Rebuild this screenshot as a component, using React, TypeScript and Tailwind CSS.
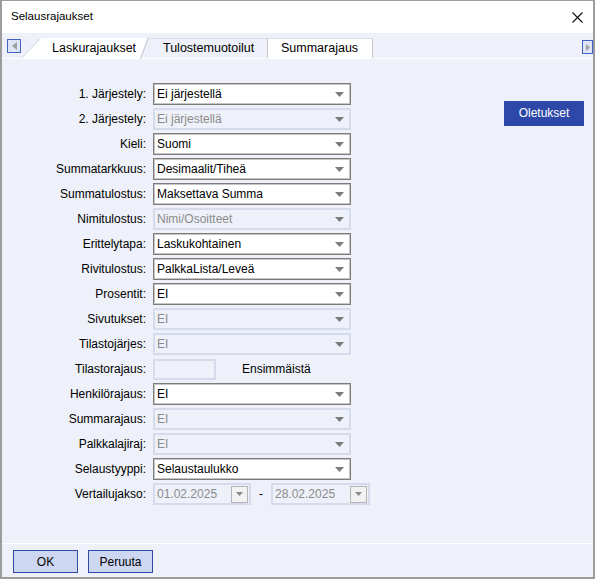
import React from "react";

const FONT = "font-['Liberation_Sans',Arial,sans-serif]";

function Tri({ c = "#7b7b7b" }: { c?: string }) {
  return (
    <svg width="9" height="5" viewBox="0 0 9 5" className="shrink-0">
      <path d="M0 0H9L4.5 5Z" fill={c} />
    </svg>
  );
}

function Sel({ v, d }: { v: string; d?: boolean }) {
  return (
    <div
      className={
        d
          ? "w-[198px] h-[22px] flex items-center justify-between pl-[2px] pr-[5px] border-2 border-[#d5dbea] text-[#8b8b8b] text-[12px]"
          : "w-[198px] h-[22px] flex items-center justify-between pl-[3px] pr-[6px] bg-white border border-[#7c7c7c] shadow-[inset_0_0_0_1px_#c6c6c6] text-black text-[12px]"
      }
    >
      <span className="leading-none">{v}</span>
      <Tri />
    </div>
  );
}

function DateBox({ v, w }: { v: string; w: string }) {
  return (
    <div
      className={`${w} h-[22px] flex items-center justify-between pl-[2px] pr-[1px] border-2 border-[#d5dbea] text-[#8b8b8b] text-[12px]`}
    >
      <span className="leading-none">{v}</span>
      <div className="w-[17px] h-[17px] flex items-center justify-center bg-[#f2f2f2] border border-[#b4b4b4]">
        <svg width="7" height="4" viewBox="0 0 7 4">
          <path d="M0 0H7L3.5 4Z" fill="#8a8a8a" />
        </svg>
      </div>
    </div>
  );
}

type Row = { l: string; v?: string; d?: boolean; kind?: "tilasto" | "date" };

const rows: Row[] = [
  { l: "1. Järjestely:", v: "Ei järjestellä" },
  { l: "2. Järjestely:", v: "Ei järjestellä", d: true },
  { l: "Kieli:", v: "Suomi" },
  { l: "Summatarkkuus:", v: "Desimaalit/Tiheä" },
  { l: "Summatulostus:", v: "Maksettava Summa" },
  { l: "Nimitulostus:", v: "Nimi/Osoitteet", d: true },
  { l: "Erittelytapa:", v: "Laskukohtainen" },
  { l: "Rivitulostus:", v: "PalkkaLista/Leveä" },
  { l: "Prosentit:", v: "EI" },
  { l: "Sivutukset:", v: "EI", d: true },
  { l: "Tilastojärjes:", v: "EI", d: true },
  { l: "Tilastorajaus:", kind: "tilasto" },
  { l: "Henkilörajaus:", v: "EI" },
  { l: "Summarajaus:", v: "EI", d: true },
  { l: "Palkkalajiraj:", v: "EI", d: true },
  { l: "Selaustyyppi:", v: "Selaustaulukko" },
  { l: "Vertailujakso:", kind: "date" },
];

export default function App() {
  return (
    <div
      className={`${FONT} w-[595px] h-[579px] flex flex-col border-t border-l-2 border-r-2 border-b-2 border-[#9c9c9c] bg-[#eef1f9] text-black overflow-hidden`}
    >
      {/* Title bar */}
      <div className="h-[32px] bg-white flex items-center justify-between pl-[9px] pr-[10px] shrink-0">
        <span className="text-[11.5px] leading-none">Selausrajaukset</span>
        <svg width="11" height="11" viewBox="0 0 11 11">
          <path d="M0.5 0.5L10.5 10.5M10.5 0.5L0.5 10.5" stroke="#111" strokeWidth="1.1" />
        </svg>
      </div>

      {/* Tab strip */}
      <div className="h-[25px] flex items-end shrink-0 text-[12.5px]">
        <div className="ml-[5px] mb-[5px] w-[14px] h-[14px] flex items-center justify-center bg-[#dfe5f4] border border-[#4262c4]">
          <svg width="5" height="8" viewBox="0 0 5 8">
            <path d="M5 0V8L0 4Z" fill="#a0a0a0" />
          </svg>
        </div>
        <div className="relative w-[126px] h-[20px] -mr-[7px] z-10 flex items-center pl-[31px]">
          <svg className="absolute inset-0" width="126" height="20" viewBox="0 0 126 20">
            <path d="M0 20L19 0H126L119 20Z" fill="#fff" />
            <path d="M0.5 20L19.5 0.5" stroke="#c8ccd6" strokeWidth="1" fill="none" />
          </svg>
          <span className="relative leading-none">Laskurajaukset</span>
        </div>
        <div className="relative w-[128px] h-[20px] flex items-center pl-[23px] border-t border-[#d9dde7] border-r border-r-[#c6c6c6]">
          <svg className="absolute left-0 top-0" width="9" height="20" viewBox="0 0 9 20">
            <path d="M8 0L0.5 20" stroke="#c2c6cf" strokeWidth="1" fill="none" />
          </svg>
          <span className="relative leading-none">Tulostemuotoilut</span>
        </div>
        <div className="w-[105px] h-[20px] flex items-center pl-[13px] bg-white border-t border-[#d9dde7] border-r border-r-[#c6c6c6]">
          <span className="leading-none">Summarajaus</span>
        </div>
        <div className="ml-auto mb-[4px] w-[11px] h-[14px] flex items-center justify-center bg-[#dfe5f4] border border-[#4262c4]">
          <svg width="4" height="7" viewBox="0 0 4 7">
            <path d="M0 0V7L4 3.5Z" fill="#a0a0a0" />
          </svg>
        </div>
      </div>

      {/* Content */}
      <div className="flex-1 flex border-t border-white">
        <div className="flex flex-col gap-[3px] pt-[24px]">
          {rows.map((r) => (
            <div key={r.l} className="h-[22px] flex items-center">
              <div className="w-[144px] text-right text-[12px] leading-none pr-[0px]">{r.l}</div>
              <div className="ml-[7px] flex items-center">
                {r.kind === "tilasto" ? (
                  <>
                    <div className="w-[63px] h-[21px] border-2 border-[#d5dbea]" />
                    <span className="ml-[26px] text-[12px] leading-none">Ensimmäistä</span>
                  </>
                ) : r.kind === "date" ? (
                  <>
                    <DateBox v="01.02.2025" w="w-[98px]" />
                    <span className="ml-[8px] text-[12px] leading-none">-</span>
                    <div className="ml-[8px]">
                      <DateBox v="28.02.2025" w="w-[99px]" />
                    </div>
                  </>
                ) : (
                  <Sel v={r.v!} d={r.d} />
                )}
              </div>
            </div>
          ))}
        </div>
        <div className="ml-auto mr-[9px] mt-[41px]">
          <button className="w-[80px] h-[25px] bg-[#2d48a9] text-white text-[12px] leading-none">
            Oletukset
          </button>
        </div>
      </div>

      {/* Footer */}
      <div className="h-[34px] shrink-0 border-t border-white flex items-start pt-[6px] pl-[11px] gap-[10px]">
        <button className="w-[65px] h-[23px] bg-[#cdd7f1] border border-[#3148a6] text-[12px] leading-none">
          OK
        </button>
        <button className="w-[65px] h-[23px] bg-[#cdd7f1] border border-[#3148a6] text-[12px] leading-none">
          Peruuta
        </button>
      </div>
    </div>
  );
}
